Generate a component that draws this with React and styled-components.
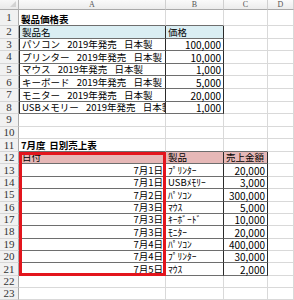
import React from 'react'
import styled, { createGlobalStyle } from 'styled-components'

const GlobalStyle = createGlobalStyle`
  html, body {
    margin: 0;
    padding: 0;
    background: #fff;
  }
  body {
    width: 294px;
    height: 300px;
    overflow: hidden;
    font-family: "Noto Sans CJK JP", "Noto Sans", sans-serif;
  }
`

const GRID = '#d9d9d9'
const LINE_V = '#2b2b2b'
const LINE_H = '#6e6e6e'

const Sheet = styled.div`
  position: relative;
  display: grid;
  grid-template-columns: 19px 147px 58px 44px 26px;
  grid-template-rows: 10px 16px repeat(10, 12.6px) repeat(10, 12.4px) 12px 12px;
  width: 294px;
  height: 300px;
  overflow: hidden;
`

const Corner = styled.div`
  position: relative;
  background: linear-gradient(#f7f7f7, #e9e9e9);
  border-right: 1px solid #b5b5b5;
  border-bottom: 1px solid #a9a9a9;
  box-sizing: border-box;

  &::after {
    content: '';
    position: absolute;
    right: 2px;
    bottom: 2px;
    border-left: 6px solid transparent;
    border-bottom: 6px solid #d3d3d3;
  }
`

const ColHead = styled.div`
  display: flex;
  align-items: flex-end;
  justify-content: center;
  box-sizing: border-box;
  background: linear-gradient(#fafafa, #ececec);
  border-right: 1px solid #d0d0d0;
  border-bottom: 1px solid #a9a9a9;
  font-family: "Liberation Serif", serif;
  font-size: 8px;
  color: #555;
  line-height: 9px;
`

const RowHead = styled.div`
  display: flex;
  align-items: center;
  justify-content: center;
  box-sizing: border-box;
  background: #f1f1f1;
  border-right: 1px solid #a9a9a9;
  border-bottom: 1px solid #d6d6d6;
  font-family: "Liberation Serif", serif;
  font-size: 11px;
  color: #333;
  line-height: 1;
`

const Cell = styled.div`
  display: flex;
  align-items: flex-end;
  justify-content: ${p => (p.$right ? 'flex-end' : 'flex-start')};
  box-sizing: border-box;
  padding: 0 2px 0 2px;
  overflow-x: ${p => (p.$spill ? 'visible' : 'clip')};
  overflow-y: visible;
  white-space: pre;
  word-spacing: 1.5px;
  background: ${p => p.$fill || '#fff'};
  border-right: 1px solid ${p => (p.$r ? LINE_V : GRID)};
  border-bottom: 1px solid ${p => (p.$b ? LINE_H : GRID)};
  border-left: ${p => (p.$l ? `1px solid ${LINE_V}` : 'none')};
  font-size: 9.5px;
  font-weight: ${p => (p.$bold ? 700 : 400)};
  line-height: 11px;
  color: #000;
  z-index: ${p => (p.$spill ? 1 : 0)};
`

const Amount = styled.span`
  font-size: 10px;
  word-spacing: 0;
`

const Selection = styled.div`
  position: absolute;
  inset: 0;
  grid-column: 2 / 3;
  grid-row: 13 / 23;
  border: 3px solid #e3151d;
  box-sizing: border-box;
  pointer-events: none;
  z-index: 2;
`

const BLUE = '#daeef3'
const PINK = '#e6b8b7'

const priceList = [
  ['パソコン  2019年発売  日本製', '100,000'],
  ['プリンター  2019年発売  日本製', '10,000'],
  ['マウス  2019年発売  日本製', '1,000'],
  ['キーボード  2019年発売  日本製', '5,000'],
  ['モニター  2019年発売  日本製', '20,000'],
  ['USBメモリー  2019年発売  日本製', '1,000'],
]

const sales = [
  ['7月1日', 'ﾌﾟﾘﾝﾀｰ', '20,000'],
  ['7月1日', 'USBﾒﾓﾘｰ', '3,000'],
  ['7月2日', 'ﾊﾟｿｺﾝ', '300,000'],
  ['7月3日', 'ﾏｳｽ', '5,000'],
  ['7月3日', 'ｷｰﾎﾞｰﾄﾞ', '10,000'],
  ['7月3日', 'ﾓﾆﾀｰ', '20,000'],
  ['7月4日', 'ﾊﾟｿｺﾝ', '400,000'],
  ['7月4日', 'ﾌﾟﾘﾝﾀｰ', '30,000'],
  ['7月5日', 'ﾏｳｽ', '2,000'],
]

// build a map of cell props keyed "row-col" (col 0 = A)
function buildCells() {
  const cells = {}
  const set = (r, c, props) => {
    cells[`${r}-${c}`] = { ...(cells[`${r}-${c}`] || {}), ...props }
  }

  set(1, 0, { text: '製品価格表', bold: true, spill: true, b: true })
  set(1, 1, { b: true })
  set(2, 0, { text: '製品名', fill: BLUE, l: true, r: true, b: true })
  set(2, 1, { text: '価格', fill: BLUE, r: true, b: true })
  priceList.forEach(([name, price], i) => {
    set(3 + i, 0, { text: name, l: true, r: true, b: true })
    set(3 + i, 1, { text: price, num: true, right: true, r: true, b: true })
  })

  set(11, 0, { text: '7月度 日別売上表', bold: true, b: true })
  set(11, 1, { b: true })
  set(11, 2, { b: true })
  set(12, 0, { text: '日付', fill: PINK, l: true, r: true, b: true })
  set(12, 1, { text: '製品', fill: PINK, r: true, b: true })
  set(12, 2, { text: '売上金額', fill: PINK, r: true, b: true })
  sales.forEach(([date, item, amount], i) => {
    set(13 + i, 0, { text: date, right: true, l: true, r: true, b: true })
    set(13 + i, 1, { text: item, r: true, b: true })
    set(13 + i, 2, { text: amount, num: true, right: true, r: true, b: true })
  })
  return cells
}

const cellMap = buildCells()
const letters = ['A', 'B', 'C', 'D']
const rowNums = Array.from({ length: 23 }, (_, i) => i + 1)

export default function App() {
  return (
    <>
      <GlobalStyle />
      <Sheet>
        <Corner />
        {letters.map(l => (
          <ColHead key={l}>{l}</ColHead>
        ))}
        {rowNums.map(r => (
          <React.Fragment key={r}>
            <RowHead>{r}</RowHead>
            {letters.map((l, c) => {
              const p = cellMap[`${r}-${c}`] || {}
              return (
                <Cell
                  key={l}
                  $fill={p.fill}
                  $bold={p.bold}
                  $right={p.right}
                  $spill={p.spill}
                  $l={p.l}
                  $r={p.r}
                  $b={p.b}
                >
                  {p.num ? <Amount>{p.text}</Amount> : p.text}
                </Cell>
              )
            })}
          </React.Fragment>
        ))}
        <Selection />
      </Sheet>
    </>
  )
}
